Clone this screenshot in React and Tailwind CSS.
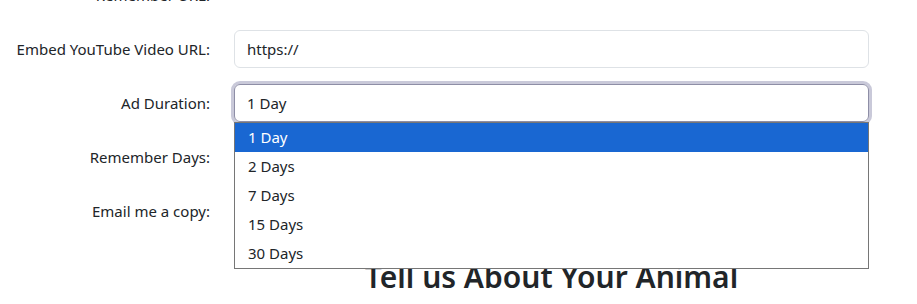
import React from "react";

const font = { fontFamily: '"Noto Sans", "Open Sans", Arial, sans-serif' };

function Row({ label, children, className = "" }) {
  return (
    <div className={"flex items-center gap-[24px] " + className}>
      <label className="w-[210px] shrink-0 text-right text-[15px] text-[#212529]">{label}</label>
      <div className="w-[635px] shrink-0">{children}</div>
    </div>
  );
}

export default function App() {
  const options = ["1 Day", "2 Days", "7 Days", "15 Days", "30 Days"];
  return (
    <div className="w-[917px] h-[304px] overflow-hidden bg-white" style={font}>
      <div className="-mt-[24px] flex flex-col gap-[16px]">
        <Row label="Remember URL:">
          <div className="h-[38px]" />
        </Row>
        <Row label="Embed YouTube Video URL:">
          <div className="h-[38px] rounded-[6px] border border-[#dee2e6] px-[12px] flex items-center text-[15px] text-[#212529]">
            https://
          </div>
        </Row>
        <Row label="Ad Duration:">
          <div className="relative">
            <div className="h-[38px] rounded-[6px] border border-[#8e8ea6] ring-[3px] ring-[#c9c9d9] px-[12px] flex items-center text-[15px] text-[#212529]">
              1 Day
            </div>
            <div className="absolute left-0 top-[38px] z-10 w-[635px] border border-[#767676] bg-white text-[15px] text-[#212529]">
              {options.map((o, i) => (
                <div
                  key={o}
                  className={
                    "h-[29px] px-[13px] flex items-center " +
                    (i === 0 ? "bg-[#1967d2] text-white" : "")
                  }
                >
                  {o}
                </div>
              ))}
            </div>
          </div>
        </Row>
        <Row label="Remember Days:">
          <div className="h-[38px]" />
        </Row>
        <Row label="Email me a copy:">
          <div className="h-[38px]" />
        </Row>
        <div className="flex">
          <div className="w-[234px] shrink-0" />
          <h2 className="w-[635px] text-center text-[30px] font-semibold leading-[1.2] text-[#212529] mt-[13px]">
            Tell us About Your Animal
          </h2>
        </div>
      </div>
    </div>
  );
}
